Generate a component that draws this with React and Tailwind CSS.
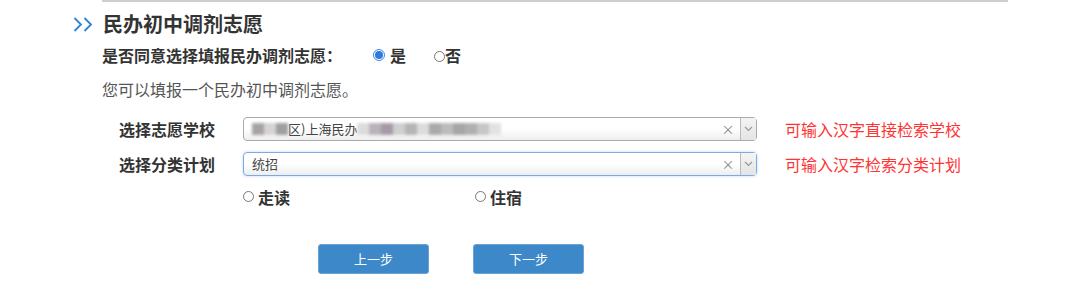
import React from "react";

const font = { fontFamily: '"Noto Sans CJK SC", "Noto Sans", sans-serif' };

function Radio({ checked }) {
    if (checked) {
        return (
            <span className="inline-flex h-[12px] w-[12px] items-center justify-center rounded-full border border-[#3b86e6] bg-white">
                <span className="h-[8px] w-[8px] rounded-full bg-[#2d7be0]" />
            </span>
        );
    }
    return <span className="inline-block h-[11px] w-[11px] rounded-full border border-[#777] bg-white" />;
}

function Select({ focused, children }) {
    return (
        <div
            className={
                "flex h-[24px] w-[514px] items-stretch rounded-[4px] border bg-gradient-to-b from-white from-50% to-[#eeeeee] " +
                (focused ? "border-[#7fa8e8] shadow-[0_0_3px_rgba(88,151,251,0.4)]" : "border-[#aaaaaa]")
            }
        >
            <div className="flex flex-1 items-center overflow-hidden pl-[8px] text-[13px] text-[#444]">{children}</div>
            <div className="flex w-[24px] items-center justify-center text-[13px] text-[#888]">×</div>
            <div className="flex w-[16px] items-center justify-center border-l border-[#bbbbbb] bg-gradient-to-b from-[#f4f4f4] to-[#e4e4e4]">
                <svg width="9" height="6" viewBox="0 0 9 6" fill="none">
                    <path d="M1 1l3.5 3.5L8 1" stroke="#999" strokeWidth="1.2" />
                </svg>
            </div>
        </div>
    );
}

// privacy blur over part of the school name
function Blur({ shades }) {
    return (
        <span className="inline-flex h-[14px] items-center blur-[1.5px]">
            {shades.map((c, i) => (
                <span key={i} className="h-[12px] w-[12px]" style={{ background: c }} />
            ))}
        </span>
    );
}

export default function App() {
    return (
        <div className="h-[289px] w-[1080px] overflow-hidden bg-white text-[#333]" style={font}>
            <div className="ml-[102px] h-[2px] w-[906px] bg-[#cfcfcf]" />

            <div className="flex h-[44px] items-center pl-[73px]">
                <svg width="20" height="15" viewBox="0 0 20 15" fill="none">
                    <path d="M1.5 1L8 7.5 1.5 14M11.5 1L18 7.5 11.5 14" stroke="#2b82d6" strokeWidth="1.8" />
                </svg>
                <h2 className="ml-[10px] text-[20px] font-bold leading-none text-[#333]">民办初中调剂志愿</h2>
            </div>

            <div className="flex h-[18px] items-center pl-[102px] text-[16px] font-bold leading-none">
                <span className="w-[271px]">是否同意选择填报民办调剂志愿：</span>
                <Radio checked />
                <span className="ml-[5px]">是</span>
                <span className="ml-[28px]">
                    <Radio />
                </span>
                <span>否</span>
            </div>

            <div className="flex h-[49px] items-center pl-[102px] text-[16px] leading-none text-[#555]">
                您可以填报一个民办初中调剂志愿。
            </div>

            <div className="flex h-[32px] items-center pl-[119px]">
                <span className="w-[124px] text-[16px] font-bold leading-none">选择志愿学校</span>
                <Select>
                    <span className="flex items-center">
                        <Blur shades={["#a8a2a8", "#d4d4d4", "#9f9f9f"]} />
                        <span>区)上海民办</span>
                        <Blur shades={["#dcdcdc", "#b9b3b9", "#a69aa6", "#cfcfcf", "#b5b5b5", "#dcdcdc", "#a9a9a9", "#bcbcbc", "#a6a6a6", "#b0b0b0", "#c6c6c6", "#e2e2e2"]} />
                    </span>
                </Select>
                <span className="ml-[28px] text-[16px] leading-none text-[#ff3333]">可输入汉字直接检索学校</span>
            </div>

            <div className="flex h-[38px] items-center pl-[119px]">
                <span className="w-[124px] text-[16px] font-bold leading-none">选择分类计划</span>
                <Select focused>统招</Select>
                <span className="ml-[28px] text-[16px] leading-none text-[#ff3333]">可输入汉字检索分类计划</span>
            </div>

            <div className="flex h-[27px] items-center pl-[243px] text-[16px] font-bold leading-none">
                <span className="flex w-[232px] items-center gap-[4px]">
                    <Radio />
                    走读
                </span>
                <span className="flex items-center gap-[4px]">
                    <Radio />
                    住宿
                </span>
            </div>

            <div className="mt-[34px] flex gap-[44px] pl-[318px]">
                <button className="h-[30px] w-[111px] rounded-[3px] border border-[#6aa3d6] bg-[#3d88c8] text-[13px] text-white">
                    上一步
                </button>
                <button className="h-[30px] w-[111px] rounded-[3px] border border-[#6aa3d6] bg-[#3d88c8] text-[13px] text-white">
                    下一步
                </button>
            </div>
        </div>
    );
}
